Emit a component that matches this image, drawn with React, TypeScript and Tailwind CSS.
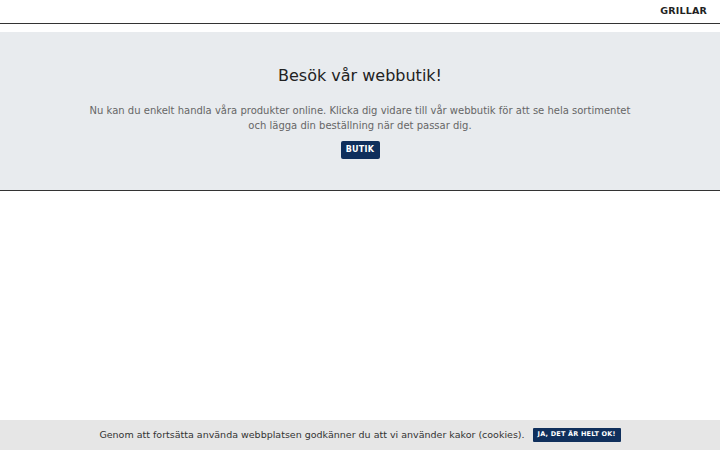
import React from "react";

export default function App() {
  const font = { fontFamily: '"DejaVu Sans", sans-serif' };
  return (
    <div className="relative w-[720px] h-[450px] bg-white overflow-hidden" style={font}>
      <div className="h-[24px] border-b border-[#333] flex items-center justify-end pr-[13px]">
        <span className="text-[9.5px] font-bold text-[#222] tracking-[0.2px]">GRILLAR</span>
      </div>
      <div className="h-[8px]" />
      <div className="h-[159px] bg-[#e8ebee] border-b border-[#333] flex flex-col items-center pt-[33px]">
        <h1 className="text-[16px] leading-[22px] text-[#222]">Besök vår webbutik!</h1>
        <p className="mt-[16px] text-[10px] leading-[15px] text-[#666] text-center w-[552px]">
          Nu kan du enkelt handla våra produkter online. Klicka dig vidare till vår webbutik för att se hela sortimentet och lägga din beställning när det passar dig.
        </p>
        <button className="mt-[8px] w-[39px] h-[18px] bg-[#0f2f5c] text-white text-[8px] font-bold rounded-[2px] tracking-[0.3px]">
          BUTIK
        </button>
      </div>
      <div className="absolute left-0 right-0 bottom-0 h-[30px] bg-[#e6e6e6] flex items-center justify-center gap-[8px]">
        <span className="text-[9.5px] text-[#333]">Genom att fortsätta använda webbplatsen godkänner du att vi använder kakor (cookies).</span>
        <button className="w-[88px] h-[14px] bg-[#0f2f5c] text-white text-[6.5px] font-bold rounded-[1px] tracking-[0.2px]">
          JA, DET ÄR HELT OK!
        </button>
      </div>
    </div>
  );
}
